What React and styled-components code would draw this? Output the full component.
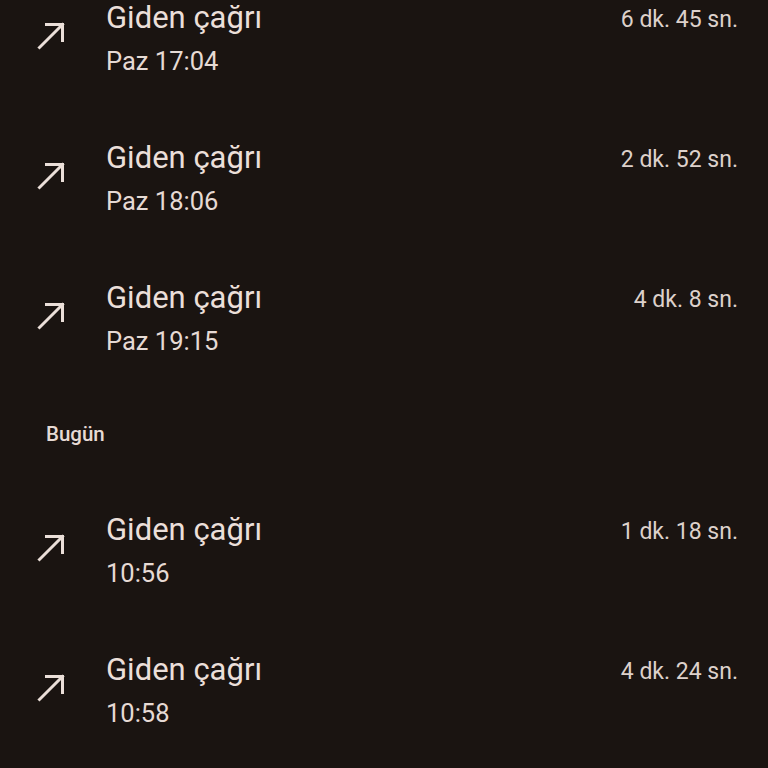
import React from "react";
import styled, { createGlobalStyle } from "styled-components";

const Global = createGlobalStyle`
  html, body { margin: 0; padding: 0; background: #1a1411; overflow: hidden; }
  body { font-family: Roboto, "Noto Sans", sans-serif; }
`;

const Page = styled.div`
  width: 768px;
  height: 768px;
  overflow: hidden;
  background: #1a1411;
`;

const List = styled.div`
  display: flex;
  flex-direction: column;
  margin-top: -32px;
`;

const Row = styled.div`
  display: grid;
  grid-template-columns: 106px 1fr auto;
  grid-template-rows: 40px 46px;
  height: 140px;
  box-sizing: border-box;
  padding: 30px 30px 24px 0;
`;

const IconCell = styled.div`
  grid-row: 1 / span 2;
  grid-column: 1;
  padding-top: 24px;
  padding-left: 37px;
  box-sizing: border-box;
`;

const Title = styled.div`
  grid-column: 2;
  font-size: 31px;
  line-height: 40px;
  color: #ebdfd9;
`;

const Sub = styled.div`
  grid-column: 2;
  grid-row: 2;
  font-size: 25.5px;
  line-height: 46px;
  color: #e6dad4;
`;

const Duration = styled.div`
  grid-column: 3;
  grid-row: 1;
  font-size: 23px;
  line-height: 40px;
  padding-top: 2px;
  color: #ddd1cb;
  text-align: right;
`;

const Header = styled.div`
  height: 92px;
  box-sizing: border-box;
  padding: 34px 0 0 46px;
  font-size: 20.5px;
  line-height: 24px;
  color: #e6dad4;
  font-weight: 500;
`;

const Arrow = () => (
  <svg width="28" height="28" viewBox="0 0 28 28" fill="none">
    <path d="M2.5 25.5 L25.5 2.5 M9.5 2.5 H25.5 V18.5" stroke="#ebdfd9" strokeWidth="3" strokeLinecap="square" />
  </svg>
);

const calls1 = [
  { sub: "Paz 17:04", dur: "6 dk. 45 sn." },
  { sub: "Paz 18:06", dur: "2 dk. 52 sn." },
  { sub: "Paz 19:15", dur: "4 dk. 8 sn." },
];
const calls2 = [
  { sub: "10:56", dur: "1 dk. 18 sn." },
  { sub: "10:58", dur: "4 dk. 24 sn." },
];

const Call = ({ sub, dur }) => (
  <Row>
    <IconCell><Arrow /></IconCell>
    <Title>Giden çağrı</Title>
    <Duration>{dur}</Duration>
    <Sub>{sub}</Sub>
  </Row>
);

export default function App() {
  return (
    <Page>
      <Global />
      <List>
        {calls1.map((c) => <Call key={c.sub} {...c} />)}
        <Header>Bugün</Header>
        {calls2.map((c) => <Call key={c.sub} {...c} />)}
      </List>
    </Page>
  );
}
